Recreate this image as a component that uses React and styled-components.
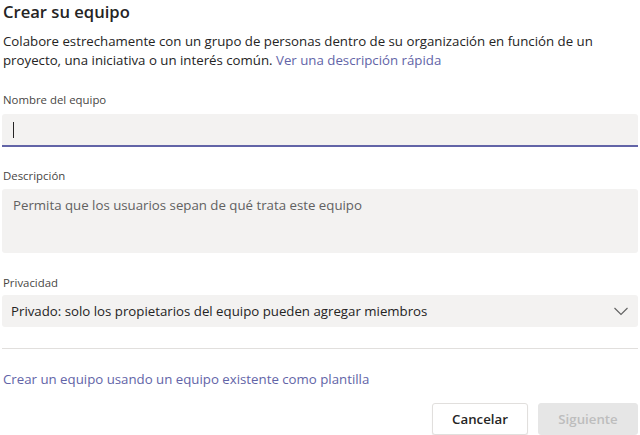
import React from "react";
import styled, { createGlobalStyle } from "styled-components";

const Global = createGlobalStyle`
  html, body { margin: 0; padding: 0; background: #fff; }
  body { font-family: "Segoe UI", "Open Sans", "Noto Sans", sans-serif; color: #252424; }
  * { box-sizing: border-box; }
`;

const Dialog = styled.div`
  width: 640px;
  height: 435px;
  overflow: hidden;
  padding: 0 2px 0 2px;
  display: flex;
  flex-direction: column;
`;

const Title = styled.h1`
  margin: 0;
  padding-left: 1px;
  font-size: 16.6px;
  line-height: 23px;
  font-weight: 600;
  color: #252424;
`;

const Intro = styled.p`
  margin: 9px 0 0;
  padding-left: 1px;
  font-size: 13.25px;
  line-height: 19px;
  color: #252424;
`;

const Link = styled.a`
  color: #6264a7;
  text-decoration: none;
  cursor: pointer;
`;

const Field = styled.div`
  display: flex;
  flex-direction: column;
  margin-top: ${(p) => p.$top}px;
`;

const Label = styled.label`
  padding-left: 1px;
  font-size: 11.4px;
  line-height: 16px;
  color: #484644;
  margin-bottom: ${(p) => p.$gap ?? 5}px;
`;

const TextInput = styled.div`
  height: 33px;
  background: #f3f2f1;
  border-radius: 3px 3px 0 0;
  border-bottom: 2px solid #6264a7;
  display: flex;
  align-items: center;
  padding-left: 11px;
`;

const Caret = styled.span`
  width: 1px;
  height: 16px;
  background: #252424;
`;

const TextArea = styled.div`
  height: 64px;
  background: #f3f2f1;
  border-radius: 3px;
  padding: 7px 11px;
  font-size: 13.25px;
  line-height: 19px;
  color: #616161;
`;

const Select = styled.div`
  height: 32px;
  background: #f3f2f1;
  border-radius: 3px;
  display: flex;
  align-items: center;
  justify-content: space-between;
  padding: 0 9px 0 9px;
  font-size: 13.25px;
  color: #252424;
`;

const Divider = styled.hr`
  margin: 21px 0 0;
  border: none;
  height: 2px;
  background: #e1dfdd;
`;

const TemplateLink = styled(Link)`
  display: block;
  margin-top: 21px;
  padding-left: 1px;
  font-size: 13.25px;
  line-height: 19px;
`;

const Actions = styled.div`
  display: flex;
  justify-content: flex-end;
  gap: 10px;
  margin-top: 14px;
`;

const Button = styled.button`
  height: 32px;
  width: ${(p) => p.$w}px;
  border-radius: 3px;
  font-family: inherit;
  font-size: 13.25px;
  font-weight: 600;
  border: 1px solid ${(p) => (p.$disabled ? "#e6e6e6" : "#e1dfdd")};
  background: ${(p) => (p.$disabled ? "#e6e6e6" : "#fff")};
  color: ${(p) => (p.$disabled ? "#bdbdbd" : "#252424")};
  box-shadow: ${(p) => (p.$disabled ? "none" : "0 1px 1px rgba(0,0,0,0.08)")};
`;

const Chevron = () => (
  <svg width="16" height="16" viewBox="0 0 16 16" fill="none">
    <path d="M1.5 5L8 11.5L14.5 5" stroke="#616161" strokeWidth="1.1" />
  </svg>
);

export default function App() {
  return (
    <>
      <Global />
      <Dialog>
        <Title>Crear su equipo</Title>
        <Intro>
          Colabore estrechamente con un grupo de personas dentro de su organización en función de un
          proyecto, una iniciativa o un interés común. <Link>Ver una descripción rápida</Link>
        </Intro>
        <Field $top={22}>
          <Label $gap={6}>Nombre del equipo</Label>
          <TextInput>
            <Caret />
          </TextInput>
        </Field>
        <Field $top={21}>
          <Label>Descripción</Label>
          <TextArea>Permita que los usuarios sepan de qué trata este equipo</TextArea>
        </Field>
        <Field $top={22}>
          <Label $gap={4}>Privacidad</Label>
          <Select>
            <span>Privado: solo los propietarios del equipo pueden agregar miembros</span>
            <Chevron />
          </Select>
        </Field>
        <Divider />
        <TemplateLink>Crear un equipo usando un equipo existente como plantilla</TemplateLink>
        <Actions>
          <Button $w={96}>Cancelar</Button>
          <Button $w={100} $disabled>Siguiente</Button>
        </Actions>
      </Dialog>
    </>
  );
}
